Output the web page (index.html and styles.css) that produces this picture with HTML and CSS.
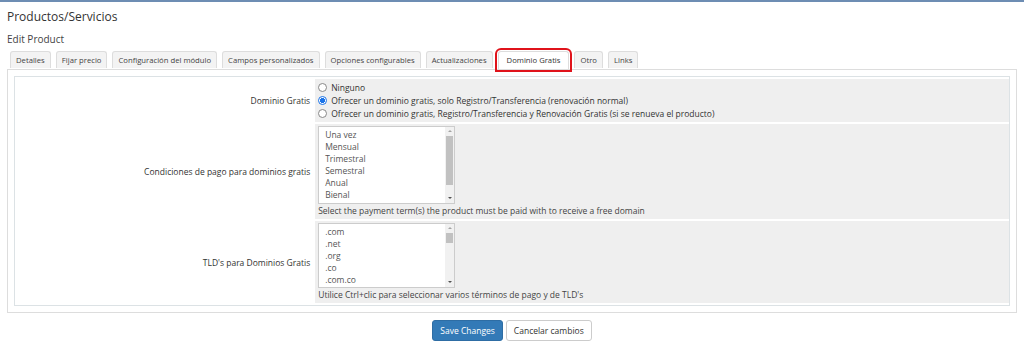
FILE: index.html
```html
<!DOCTYPE html>
<html lang="es">
<head>
<meta charset="utf-8">
<title>Productos/Servicios</title>
<link rel="stylesheet" href="styles.css">
</head>
<body>
<div class="page">
  <h1 class="title">Productos/Servicios</h1>
  <h2 class="subtitle">Edit Product</h2>
  <ul class="tabs">
    <li class="tab">Detalles</li>
    <li class="tab">Fijar precio</li>
    <li class="tab">Configuración del módulo</li>
    <li class="tab">Campos personalizados</li>
    <li class="tab">Opciones configurables</li>
    <li class="tab">Actualizaciones</li>
    <li class="tab active">Dominio Gratis</li>
    <li class="tab">Otro</li>
    <li class="tab">Links</li>
  </ul>
  <div class="tab-content">
    <table class="form">
      <tr>
        <td class="label">Dominio Gratis</td>
        <td class="field">
          <label class="radio"><span class="dot"></span>Ninguno</label>
          <label class="radio"><span class="dot checked"></span>Ofrecer un dominio gratis, solo Registro/Transferencia (renovación normal)</label>
          <label class="radio"><span class="dot"></span>Ofrecer un dominio gratis, Registro/Transferencia y Renovación Gratis (si se renueva el producto)</label>
        </td>
      </tr>
      <tr>
        <td class="label">Condiciones de pago para dominios gratis</td>
        <td class="field">
          <div class="listbox lb-terms" role="listbox">
            <div class="options">
              <div>Una vez</div>
              <div>Mensual</div>
              <div>Trimestral</div>
              <div>Semestral</div>
              <div>Anual</div>
              <div>Bienal</div>
            </div>
            <div class="sbar">
              <span class="arr up"></span>
              <span class="track"><span class="thumb thumb-terms"></span></span>
              <span class="arr down"></span>
            </div>
          </div>
          <div class="help">Select the payment term(s) the product must be paid with to receive a free domain</div>
        </td>
      </tr>
      <tr>
        <td class="label">TLD's para Dominios Gratis</td>
        <td class="field">
          <div class="listbox lb-tlds" role="listbox">
            <div class="options">
              <div>.com</div>
              <div>.net</div>
              <div>.org</div>
              <div>.co</div>
              <div>.com.co</div>
            </div>
            <div class="sbar">
              <span class="arr up"></span>
              <span class="track"><span class="thumb thumb-tlds"></span></span>
              <span class="arr down"></span>
            </div>
          </div>
          <div class="help">Utilice Ctrl+clic para seleccionar varios términos de pago y de TLD's</div>
        </td>
      </tr>
    </table>
  </div>
  <div class="actions">
    <button class="btn primary">Save Changes</button>
    <button class="btn">Cancelar cambios</button>
  </div>
</div>
</body>
</html>
```

FILE: styles.css
```css
html, body {
  margin: 0;
  padding: 0;
  background: #fff;
}
body {
  font-family: "Open Sans", "Liberation Sans", sans-serif;
  color: #333;
  border-top: 2px solid #6d8db3;
}
.page {
  padding: 0 7px;
}
.title {
  font-size: 12px;
  font-weight: 400;
  margin: 0;
  padding-top: 7px;
  line-height: 16px;
}
.subtitle {
  font-size: 10px;
  font-weight: 400;
  margin: 0;
  padding-top: 7px;
  line-height: 14px;
  color: #444;
}
.tabs {
  list-style: none;
  margin: 0;
  padding: 5px 0 0 3px;
  display: flex;
  gap: 5px;
  position: relative;
  z-index: 1;
}
.tab {
  height: 16px;
  line-height: 16px;
  padding: 0 5px;
  font-size: 7.7px;
  color: #444;
  background: #f3f3f3;
  border: 1px solid #ddd;
  border-bottom: none;
  border-radius: 3px 3px 0 0;
}
.tab.active {
  background: #fff;
  color: #333;
  padding: 0 8px;
  outline: 2px solid #e0131b;
  outline-offset: 1px;
  height: 17px;
}
.tab-content {
  border: 1px solid #ddd;
  padding: 6px;
}
.form {
  width: 100%;
  border-collapse: separate;
  border-spacing: 0 2px;
  border: 1px solid #dce2e5;
  font-size: 8.5px;
}
.form td {
  padding: 0 2px;
  vertical-align: middle;
}
.label {
  width: 30.2%;
  text-align: right;
  background: #fff;
  padding-right: 5px !important;
}
.field {
  background: #efefef;
  padding-left: 3px !important;
  padding-top: 2px !important;
  padding-bottom: 2px !important;
}
.radio {
  display: flex;
  align-items: center;
  height: 13px;
  line-height: 13px;
}
.dot {
  width: 9px;
  height: 9px;
  border: 1px solid #888;
  border-radius: 50%;
  background: #fff;
  margin: 0 4px 0 0;
  box-sizing: border-box;
}
.dot.checked {
  border-color: #1a73e8;
  background: radial-gradient(circle, #1a73e8 0 2.4px, #fff 2.8px);
}
.listbox {
  display: flex;
  width: 137px;
  border: 1px solid #ccc;
  background: #fff;
  box-sizing: border-box;
}
.lb-terms { height: 78px; }
.lb-tlds { height: 65px; }
.options {
  flex: 1;
  padding: 2px 6px;
  line-height: 12px;
  overflow: hidden;
  color: #555;
}
.sbar {
  width: 9px;
  display: flex;
  flex-direction: column;
  background: #f1f1f1;
}
.arr {
  height: 9px;
  position: relative;
}
.arr::after {
  content: "";
  position: absolute;
  left: 2.5px;
  top: 3px;
  border-left: 2px solid transparent;
  border-right: 2px solid transparent;
}
.arr.up::after { border-bottom: 2px solid #a3a3a3; }
.arr.down::after { border-top: 2px solid #505050; }
.track {
  flex: 1;
  display: flex;
  flex-direction: column;
  padding: 0 1px;
}
.thumb {
  background: #c1c1c1;
}
.thumb-terms { height: 49px; }
.thumb-tlds { height: 10px; }
.help {
  line-height: 13px;
  color: #444;
}
.actions {
  display: flex;
  justify-content: center;
  gap: 3px;
  padding-top: 7px;
}
.btn {
  font-family: "Open Sans", "Liberation Sans", sans-serif;
  font-size: 8.5px;
  height: 21px;
  padding: 0 7px;
  border: 1px solid #ccc;
  background: #fff;
  color: #333;
  border-radius: 3px;
}
.btn.primary {
  background: #337ab7;
  border-color: #2e6da4;
  color: #fff;
}
```
